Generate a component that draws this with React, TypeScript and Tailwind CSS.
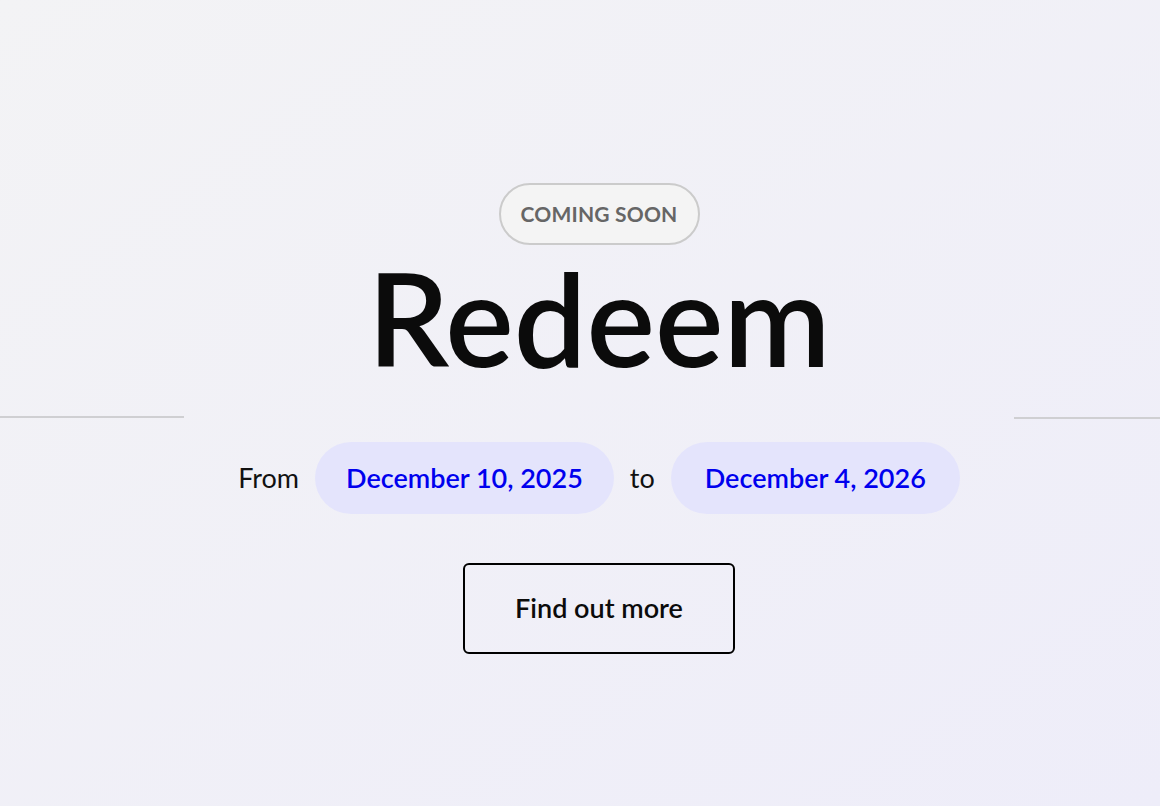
export default function App() {
  const font = { fontFamily: "Lato, 'Noto Sans', sans-serif" };
  return (
    <div
      className="min-h-screen w-full bg-gradient-to-br from-[#f3f3f5] to-[#eeedf9] overflow-hidden"
      style={font}
    >
      <div className="flex items-start pt-[183px]">
        {/* left rule */}
        <div className="w-[184px] shrink-0 h-[2px] bg-[#cfcfd2] mt-[233px]" />

        <div className="w-[830px] shrink-0 flex flex-col items-center">
          {/* badge */}
          <div className="h-[62px] w-[201px] rounded-full border-2 border-[#cbcbcb] bg-[#f4f4f4] flex items-center justify-center">
            <span className="text-[21px] font-bold text-[#666666] tracking-[0.2px]">COMING SOON</span>
          </div>

          {/* title */}
          <h1 className="mt-[-3px] mb-[3px] text-[129px] leading-[150px] font-semibold text-[#0b0b0b]">
            Redeem
          </h1>

          {/* dates */}
          <div className="mt-[47px] flex items-center gap-4 text-[27px]">
            <span className="text-[#111111]">From</span>
            <span className="h-[72px] px-[31px] rounded-full bg-[#e4e4fc] text-[#0000ee] font-semibold flex items-center">
              December 10, 2025
            </span>
            <span className="text-[#111111]">to</span>
            <span className="h-[72px] px-[34px] rounded-full bg-[#e4e4fc] text-[#0000ee] font-semibold flex items-center">
              December 4, 2026
            </span>
          </div>

          {/* cta */}
          <button className="mt-[49px] w-[272px] h-[91px] rounded-md border-2 border-black text-[27px] font-semibold text-[#0b0b0b] flex items-center justify-center">
            Find out more
          </button>
        </div>

        {/* right rule */}
        <div className="flex-1 h-[2px] bg-[#cfcfd2] mt-[234px]" />
      </div>
    </div>
  );
}
